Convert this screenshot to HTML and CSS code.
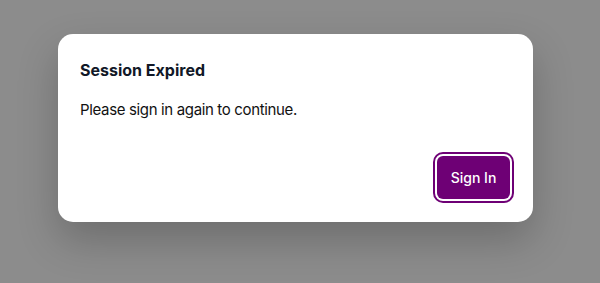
FILE: index.html
```html
<!DOCTYPE html>
<html lang="en">
<head>
    <meta charset="UTF-8">
    <meta name="viewport" content="width=device-width, initial-scale=1.0">
    <title>Session Expired</title>
    <link rel="stylesheet" href="styles.css">
</head>
<body>
    <div class="overlay">
        <div class="dialog" role="dialog" aria-labelledby="dialogTitle">
            <h2 id="dialogTitle">Session Expired</h2>
            <p>Please sign in again to continue.</p>
            <div class="actions">
                <button class="primary">Sign In</button>
            </div>
        </div>
    </div>
</body>
</html>
```

FILE: styles.css
```css
html, body {
    margin: 0;
    height: 100%;
}
body {
    background: #8c8c8c;
    font-family: Inter, "Noto Sans", sans-serif;
}
.overlay {
    padding: 34px 0 0 58px;
}
.dialog {
    width: 475px;
    height: 188px;
    box-sizing: border-box;
    padding: 24px 23px 23px 22px;
    background: #fff;
    border-radius: 15px;
    box-shadow: 0 18px 40px rgba(0, 0, 0, 0.22);
}
.dialog h2 {
    margin: 0;
    font-size: 16px;
    line-height: 24px;
    font-weight: 700;
    color: #111827;
}
.dialog p {
    margin: 17px 0 0;
    font-size: 15px;
    line-height: 22px;
    letter-spacing: -0.35px;
    color: #111;
}
.actions {
    display: flex;
    justify-content: flex-end;
    margin-top: 35px;
}
button.primary {
    width: 73px;
    height: 43px;
    padding: 0;
    font-family: inherit;
    font-size: 14px;
    font-weight: 500;
    color: #fff;
    background: #6e0075;
    border: none;
    border-radius: 6px;
    box-shadow: 0 0 0 2px #fff, 0 0 0 4px #6e0075;
    cursor: pointer;
}
```
